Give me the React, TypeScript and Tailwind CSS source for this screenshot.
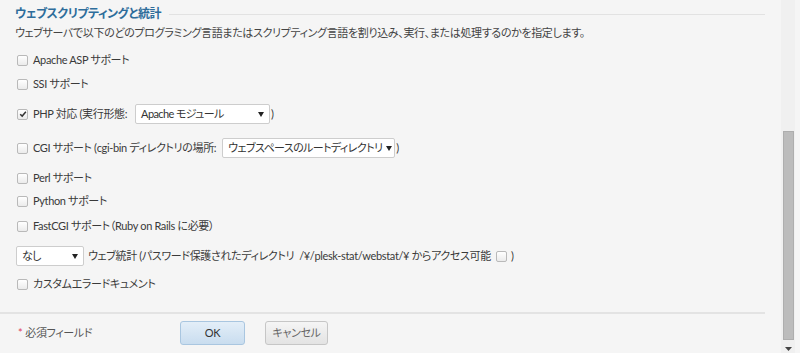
import type { ReactNode } from "react";

const font = "[font-family:Lato,'Noto_Sans_CJK_JP',sans-serif] [font-feature-settings:'palt']";

function Check({ checked = false }: { checked?: boolean }) {
  return (
    <span className="flex h-[11px] w-[11px] shrink-0 items-center justify-center rounded-[2px] border border-[#b9b9b9] bg-gradient-to-b from-white to-[#ebebeb]">
      {checked && (
        <svg viewBox="0 0 10 10" className="h-[8px] w-[8px]">
          <path d="M1.5 5.2 L4 7.6 L8.6 2.2" fill="none" stroke="#333" strokeWidth="1.8" />
        </svg>
      )}
    </span>
  );
}

function Select({ value, width }: { value: string; width: string }) {
  return (
    <span
      className={`flex h-[20px] items-center justify-between gap-[4px] overflow-hidden whitespace-nowrap rounded-[2px] border border-[#cdcdcd] bg-white pl-[5px] pr-[5px] text-[#333] ${width}`}
    >
      <span className="tracking-[-0.6px]">{value}</span>
      <svg viewBox="0 0 6 5" className="h-[5px] w-[6px] shrink-0">
        <path d="M0 0 H6 L3 5 Z" fill="#222" />
      </svg>
    </span>
  );
}

function Row({ className = "", children }: { className?: string; children: ReactNode }) {
  return (
    <div className={`flex h-[20px] items-center gap-[5px] whitespace-nowrap pl-[17px] ${className}`}>{children}</div>
  );
}

export default function App() {
  return (
    <div
      className={`flex h-[353px] w-[800px] overflow-hidden bg-[#f5f5f5] text-[11px] tracking-[-0.35px] text-[#3a3a3a] ${font}`}
    >
      <div className="flex w-[765px] flex-col pt-[6px]">
        <div className="flex h-[16px] items-center gap-[8px] pl-[15px]">
          <span className="text-[12px] font-semibold tracking-[-0.5px] text-[#2e6d9b]">ウェブスクリプティングと統計</span>
          <span className="h-px flex-1 bg-[#e2e2e2]" />
        </div>
        <p className="mt-[3px] h-[16px] whitespace-nowrap pl-[15px] leading-[16px] text-[#444]">
          ウェブサーバで以下のどのプログラミング言語またはスクリプティング言語を割り込み、実行、または処理するのかを指定します。
        </p>

        <Row className="mt-[9px]">
          <Check />
          <span>Apache ASP サポート</span>
        </Row>
        <Row className="mt-[4px]">
          <Check />
          <span>SSI サポート</span>
        </Row>
        <Row className="mt-[10px]">
          <Check checked />
          <span>PHP 対応 (実行形態:</span>
          <span className="ml-[3px] -mr-[4px]">
            <Select value="Apache モジュール" width="w-[135px]" />
          </span>
          <span>)</span>
        </Row>
        <Row className="mt-[14px]">
          <Check />
          <span>CGI サポート (cgi-bin ディレクトリの場所:</span>
          <span className="ml-[1px] -mr-[4px]">
            <Select value="ウェブスペースのルートディレクトリ" width="w-[173px]" />
          </span>
          <span>)</span>
        </Row>
        <Row className="mt-[10px]">
          <Check />
          <span>Perl サポート</span>
        </Row>
        <Row className="mt-[3px]">
          <Check />
          <span>Python サポート</span>
        </Row>
        <Row className="mt-[5px]">
          <Check />
          <span>FastCGI サポート（Ruby on Rails に必要）</span>
        </Row>
        <div className="mt-[10px] flex h-[20px] items-center gap-[4px] whitespace-nowrap pl-[16px]">
          <Select value="なし" width="w-[68px]" />
          <span>ウェブ統計 (パスワード保護されたディレクトリ &nbsp;/¥/plesk-stat/webstat/¥ からアクセス可能</span>
          <span className="ml-[1px]">
            <Check />
          </span>
          <span>)</span>
        </div>
        <Row className="mt-[8px]">
          <Check />
          <span>カスタムエラードキュメント</span>
        </Row>

        <div className="mt-[18px] h-[2px] bg-[#e3e3e3]" />

        <div className="mt-[7px] flex h-[24px] items-center pl-[18px]">
          <span className="w-[162px] text-[#555]">
            <span className="mr-[3px] text-[#e0405a]">*</span>必須フィールド
          </span>
          <button className="h-[24px] w-[65px] rounded-[3px] border border-[#a9c6e0] bg-gradient-to-b from-[#e3eef8] to-[#c9ddef] text-[#333]">
            OK
          </button>
          <button className="ml-[20px] h-[24px] w-[63px] rounded-[3px] border border-[#c6c6c6] bg-gradient-to-b from-[#f5f5f5] to-[#e3e3e3] text-[#666]">
            キャンセル
          </button>
        </div>
      </div>

      <div className="ml-[16px] flex w-[14px] flex-col bg-[#f0f0f0]">
        <div className="mt-[131px] ml-[2px] h-[209px] w-[11px] border border-[#aeaeae] bg-[#bcbcbc]" />
        <div className="mt-auto flex h-[10px] items-end justify-center pb-[2px]">
          <svg viewBox="0 0 7 4" className="h-[4px] w-[7px]">
            <path d="M0 0 H7 L3.5 4 Z" fill="#444" />
          </svg>
        </div>
      </div>
    </div>
  );
}
